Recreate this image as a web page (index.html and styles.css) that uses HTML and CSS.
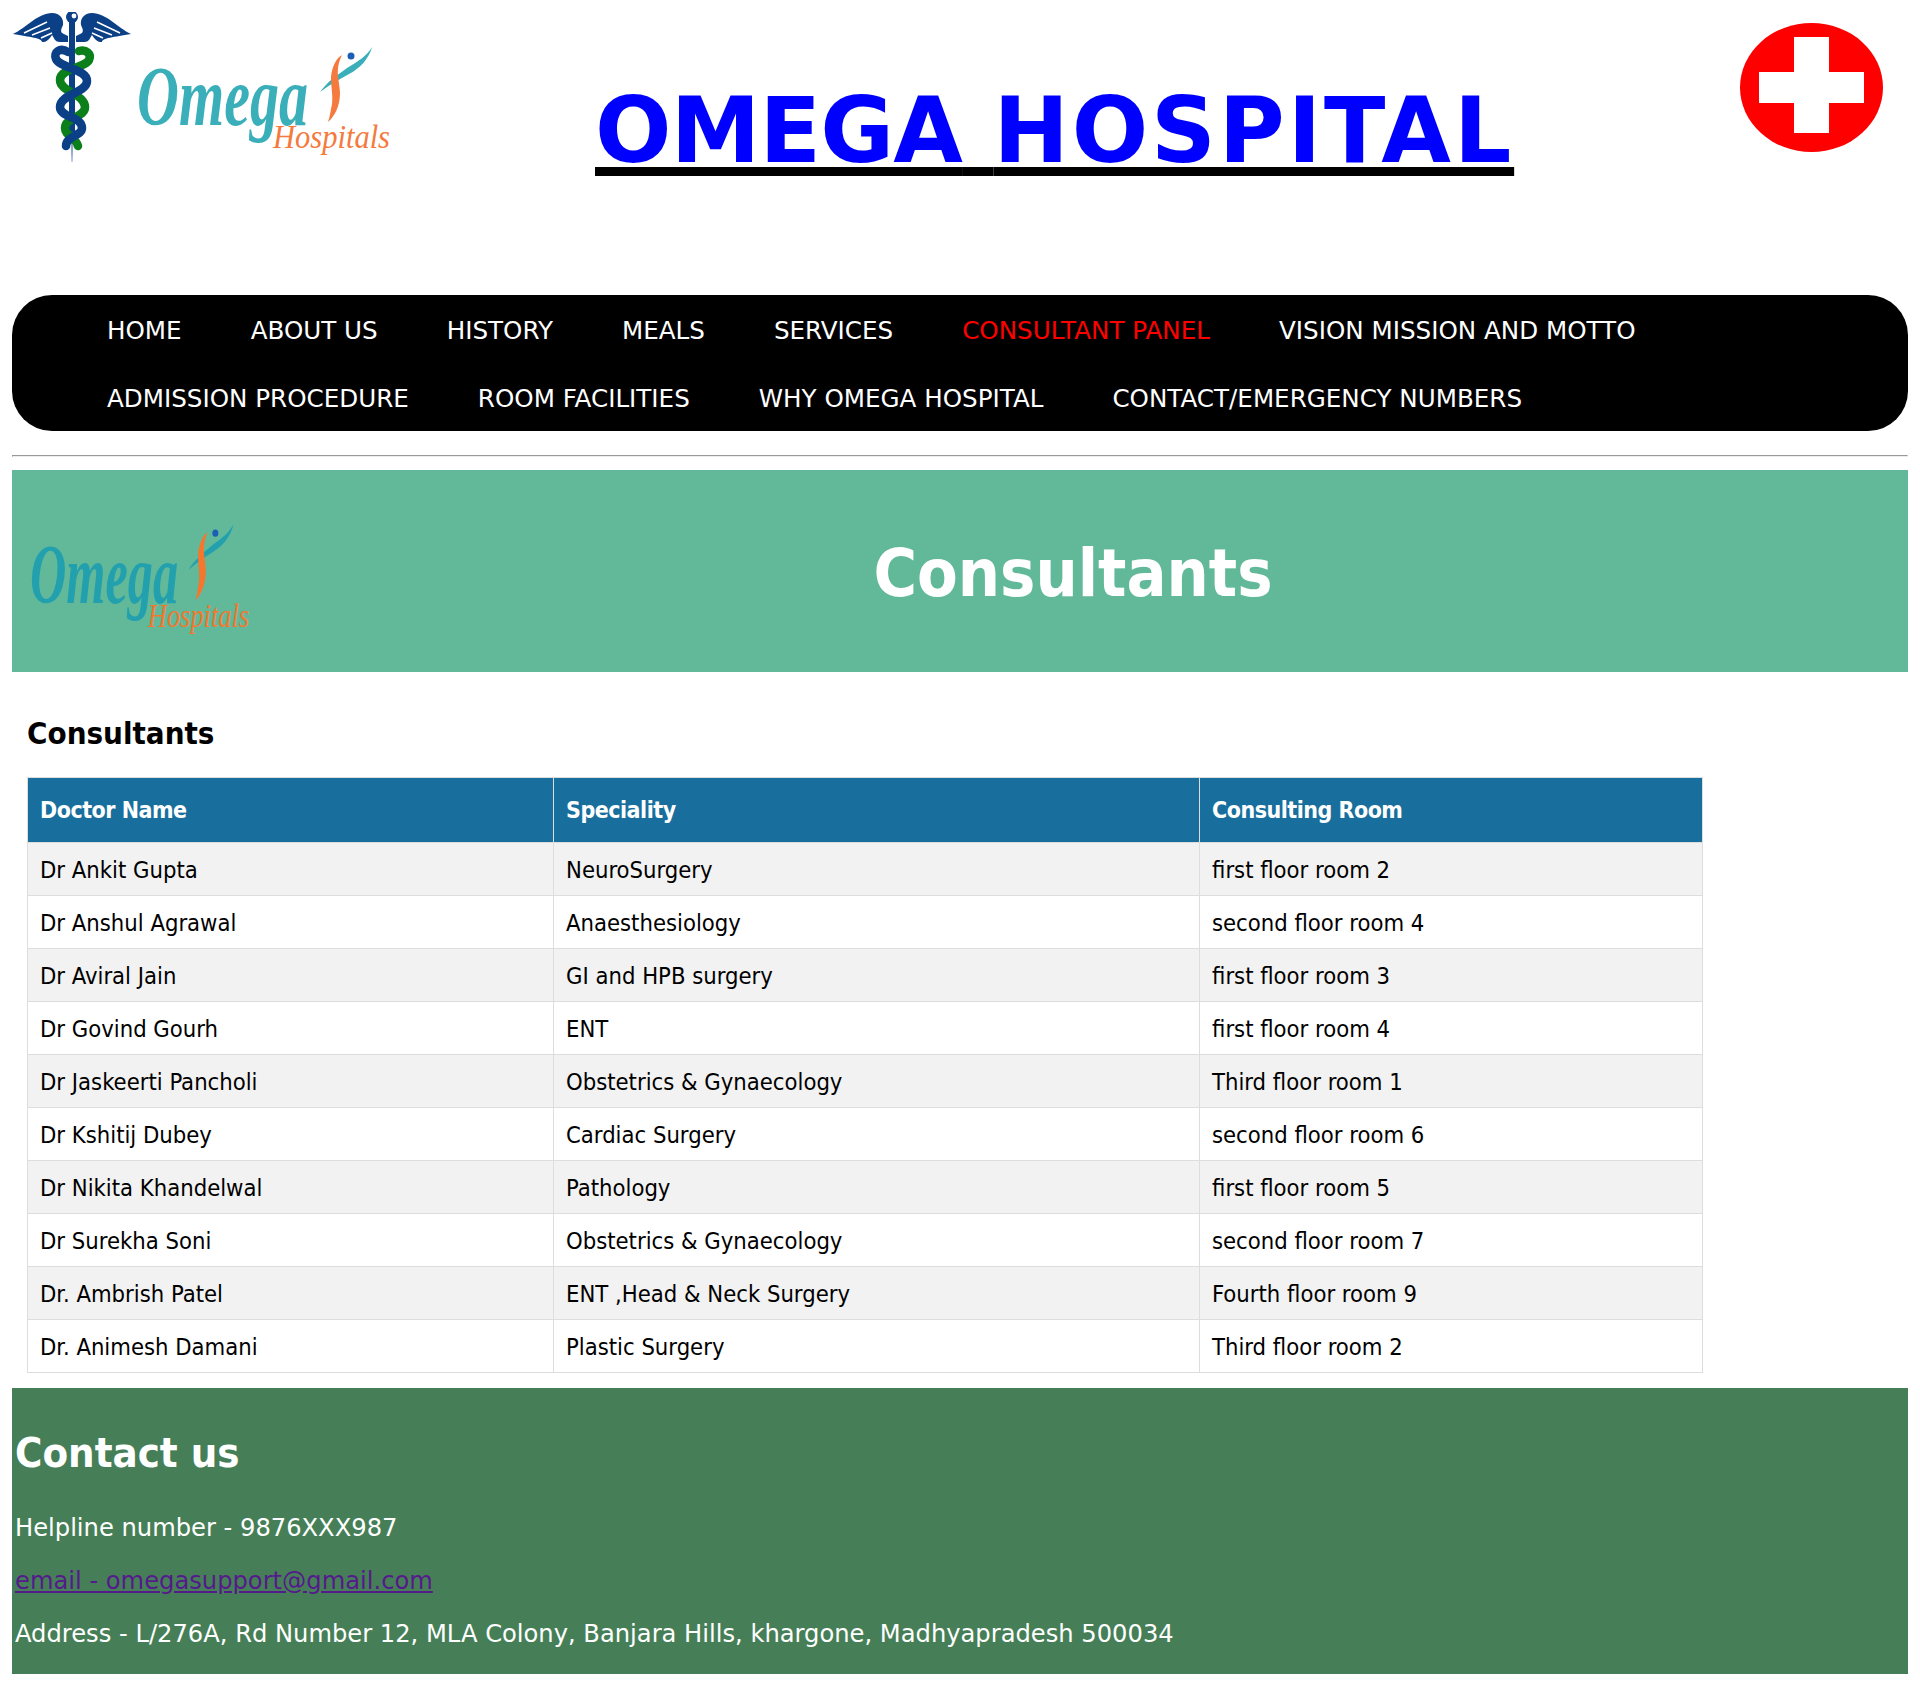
FILE: index.html
```html
<!DOCTYPE html>
<html lang="en">
	<head>
		<meta charset="utf-8">
		<meta name="viewport" content="width=device-width, initial-scale=1.0">
		<title>Omega Hospital</title>
		<link rel="stylesheet" href="styles.css">
	</head>

	<body>
		<header class="top">
			<div class="logo">
				<svg class="staff" viewBox="0 0 140 170" width="140" height="170">
					<path class="wing" d="M13 34C26 28 38 13 52 13C60 13 64 19 63 25C62 28 60 30 62 33L68 36V42H60C54 42 54 37 52 35C48 42 44 42 42 42C42 38 30 37 13 34Z"/>
					<path class="wing" d="M131 34C118 28 106 13 92 13C84 13 80 19 81 25C82 28 84 30 82 33L76 36V42H84C90 42 90 37 92 35C96 42 100 42 102 42C102 38 114 37 131 34Z"/>
					<path class="feather" d="M24 33L47 22M32 35L50 28M41 38L52 33M120 33L97 22M112 35L94 28M103 38L92 33"/>
					<path class="rod-tail" d="M70 130H74L72.5 162H71.5Z"/>
					<rect class="rod" x="69" y="20" width="6" height="112"/>
					<circle class="rod" cx="72" cy="17" r="6"/>
					<circle class="rod-eye" cx="74" cy="16" r="2.4"/>
					<path class="snake-green" d="M79 51C86 49 92 54 89 60C85 68 60 68 60 80C60 92 85 94 85 107C85 118 65 117 65 128C65 136 76 137 78 146"/>
					<path class="snake-blue" d="M68 52C60 47 53 52 56 59C60 68 87 69 87 81C87 93 60 94 60 107C60 118 82 116 82 128C82 136 66 136 66 146"/>
				</svg>
				<svg class="logo-mark" viewBox="0 0 254 110" width="254" height="110" preserveAspectRatio="none">
					<text class="omega-word" x="0" y="78" textLength="171" lengthAdjust="spacingAndGlyphs">Omega</text>
					<text class="omega-sub" x="136" y="101" textLength="117" lengthAdjust="spacingAndGlyphs">Hospitals</text>
					<path class="omega-swoosh" d="M183 45C190 35 199 29 210 21C220 15 230 9 235 0C232 12 222 22 212 27C203 32 192 38 183 45Z"/>
					<path class="omega-body" d="M205 8C199 11 195 20 194 30C194 42 197 52 194 62C193 68 192 72 191 75C197 70 203 60 203 46C203 34 197 24 205 8Z"/>
					<circle class="omega-dot" cx="214" cy="9" r="3.5"/>
				</svg>
			</div>
			<h1 class="site-title"><a href="#"><span class="first">OMEGA</span> <span class="second">HOSPITAL</span></a></h1>
			<svg class="cross" viewBox="0 0 143 129" width="143" height="129">
				<ellipse cx="71.5" cy="64.5" rx="71.5" ry="64.5" fill="#fe0000"/>
				<path d="M54 14H89V49H124V80H89V110H54V80H19V49H54Z" fill="#fff"/>
			</svg>
		</header>

		<nav class="menu">
			<ul>
				<li><a href="#">HOME</a></li>
				<li><a href="#">ABOUT US</a></li>
				<li><a href="#">HISTORY</a></li>
				<li><a href="#">MEALS</a></li>
				<li><a href="#">SERVICES</a></li>
				<li><a href="#" class="active">CONSULTANT PANEL</a></li>
				<li><a href="#">VISION MISSION AND MOTTO</a></li>
				<li class="break"></li>
				<li><a href="#">ADMISSION PROCEDURE</a></li>
				<li><a href="#">ROOM FACILITIES</a></li>
				<li><a href="#">WHY OMEGA HOSPITAL</a></li>
				<li><a href="#">CONTACT/EMERGENCY NUMBERS</a></li>
			</ul>
		</nav>

		<hr class="rule">

		<section class="banner">
			<svg class="banner-logo" viewBox="0 0 254 110" width="220" height="112" preserveAspectRatio="none">
				<text class="omega-word" x="0" y="78" textLength="171" lengthAdjust="spacingAndGlyphs">Omega</text>
				<text class="omega-sub" x="136" y="101" textLength="117" lengthAdjust="spacingAndGlyphs">Hospitals</text>
				<path class="omega-swoosh" d="M183 45C190 35 199 29 210 21C220 15 230 9 235 0C232 12 222 22 212 27C203 32 192 38 183 45Z"/>
				<path class="omega-body" d="M205 8C199 11 195 20 194 30C194 42 197 52 194 62C193 68 192 72 191 75C197 70 203 60 203 46C203 34 197 24 205 8Z"/>
				<circle class="omega-dot" cx="214" cy="9" r="3.5"/>
			</svg>
			<h1>Consultants</h1>
		</section>

		<main class="panel">
			<h3>Consultants</h3>
			<table>
				<thead>
					<tr><th class="c1">Doctor Name</th><th class="c2">Speciality</th><th>Consulting Room</th></tr>
				</thead>
				<tbody>
					<tr><td>Dr Ankit Gupta</td><td>NeuroSurgery</td><td>first floor room 2</td></tr>
					<tr><td>Dr Anshul Agrawal</td><td>Anaesthesiology</td><td>second floor room 4</td></tr>
					<tr><td>Dr Aviral Jain</td><td>GI and HPB surgery</td><td>first floor room 3</td></tr>
					<tr><td>Dr Govind Gourh</td><td>ENT</td><td>first floor room 4</td></tr>
					<tr><td>Dr Jaskeerti Pancholi</td><td>Obstetrics &amp; Gynaecology</td><td>Third floor room 1</td></tr>
					<tr><td>Dr Kshitij Dubey</td><td>Cardiac Surgery</td><td>second floor room 6</td></tr>
					<tr><td>Dr Nikita Khandelwal</td><td>Pathology</td><td>first floor room 5</td></tr>
					<tr><td>Dr Surekha Soni</td><td>Obstetrics &amp; Gynaecology</td><td>second floor room 7</td></tr>
					<tr><td>Dr. Ambrish Patel</td><td>ENT ,Head &amp; Neck Surgery</td><td>Fourth floor room 9</td></tr>
					<tr><td>Dr. Animesh Damani</td><td>Plastic Surgery</td><td>Third floor room 2</td></tr>
				</tbody>
			</table>
		</main>

		<footer class="contact">
			<h2>Contact us</h2>
			<p>Helpline number - 9876XXX987</p>
			<p><a href="#">email - omegasupport@gmail.com</a></p>
			<p>Address - L/276A, Rd Number 12, MLA Colony, Banjara Hills, khargone, Madhyapradesh 500034</p>
		</footer>
	</body>
</html>
```

FILE: styles.css
```css
body{
	margin: 12px;
	font-family: "DejaVu Sans", sans-serif;
	color: black;
}
svg{
	overflow: visible;
}
.omega-word{
	font-family: "Liberation Serif", serif;
	font-style: italic;
	font-weight: bold;
	font-size: 84px;
	fill: #3aafb9;
}
.omega-sub{
	font-family: "Liberation Serif", serif;
	font-style: italic;
	font-size: 33px;
	fill: #f47a3d;
}
.omega-swoosh{
	fill: #3aafb9;
}
.omega-body{
	fill: #f47a3d;
}
.omega-dot{
	fill: #1d5fb5;
}
.banner-logo .omega-word, .banner-logo .omega-swoosh{
	fill: #23a0ad;
}
.banner-logo .omega-sub, .banner-logo .omega-body{
	fill: #f4772e;
}

.top{
	display: flex;
	align-items: flex-start;
	height: 283px;
}
.logo{
	display: flex;
	align-items: flex-start;
	width: 390px;
	margin-left: -12px;
}
.staff{
	flex: none;
	margin-top: -12px;
	margin-right: -3px;
}
.logo-mark{
	flex: none;
	margin-top: 35px;
}
.wing, .rod{
	fill: #0b3f86;
}
.feather{
	fill: none;
	stroke: white;
	stroke-width: 1.5;
}
.rod-tail{
	fill: #8fa8c8;
}
.rod-eye{
	fill: white;
}
.snake-green, .snake-blue{
	fill: none;
	stroke-width: 8.5;
	stroke-linecap: round;
}
.snake-green{
	stroke: #0a7f1a;
}
.snake-blue{
	stroke: #0b3f86;
}
.site-title{
	margin: 71px 0 0 205px;
	font-size: 90px;
	line-height: 96px;
	font-weight: bold;
	white-space: nowrap;
}
.site-title .first{
	letter-spacing: -.8px;
}
.site-title .second{
	letter-spacing: 2.9px;
}
.site-title a{
	color: blue;
	text-decoration: underline black 9px;
	text-underline-offset: 5px;
}
.cross{
	flex: none;
	margin: 11px 25px 0 auto;
}

.menu{
	height: 136px;
	border-radius: 40px;
	background-color: black;
}
.menu ul{
	display: flex;
	flex-wrap: wrap;
	margin: 0;
	padding: 2px 0 0 60.5px;
	list-style: none;
}
.menu li{
	padding: 0 34.5px;
	font-size: 24.6px;
	line-height: 68px;
}
.menu li.break{
	flex-basis: 100%;
	height: 0;
	padding: 0;
}
.menu a{
	color: white;
	text-decoration: none;
}
.menu a.active{
	color: red;
}

.rule{
	margin: 24px 0 13px;
	border-width: 1px;
	border-style: solid;
	border-color: #999 #eee #eee #999;
}

.banner{
	display: flex;
	align-items: center;
	height: 202px;
	background-color: #62b99a;
}
.banner-logo{
	flex: none;
	margin: 18px 0 0 18px;
}
.banner h1{
	margin: 4px 0 0 -238px;
	flex: 1;
	padding-left: 226px;
	text-align: center;
	color: white;
	font-family: "DejaVu Sans Condensed", "DejaVu Sans", sans-serif;
	font-size: 66px;
}

.panel{
	padding: 0 15px;
}
.panel h3{
	margin: 44px 0 27px;
	font-family: "DejaVu Sans Condensed", "DejaVu Sans", sans-serif;
	font-size: 31px;
	line-height: 34px;
}
table{
	width: 1676px;
	border-collapse: collapse;
	font-family: "DejaVu Sans Condensed", "DejaVu Sans", sans-serif;
	font-size: 23.6px;
}
th, td{
	padding: 2px 12px 0;
	border: 1px solid #ddd;
	text-align: left;
}
th{
	height: 64px;
	padding-top: 0;
	font-size: 23px;
	letter-spacing: -.5px;
	background-color: #186f9d;
	color: white;
}
td{
	height: 50px;
}
.c1{
	width: 501px;
}
.c2{
	width: 621px;
}
tbody tr:nth-child(odd){
	background-color: #f2f2f2;
}

.contact{
	margin-top: 15px;
	height: 286px;
	padding: 0 3px;
	overflow: hidden;
	background-color: #467f57;
	color: white;
	font-size: 24.2px;
}
.contact h2{
	margin: 41px 0 26px;
	font-family: "DejaVu Sans Condensed", "DejaVu Sans", sans-serif;
	font-size: 41.5px;
	line-height: 47px;
}
.contact p{
	margin: 0;
	line-height: 53px;
}
.contact a{
	color: #551a8b;
}
```
